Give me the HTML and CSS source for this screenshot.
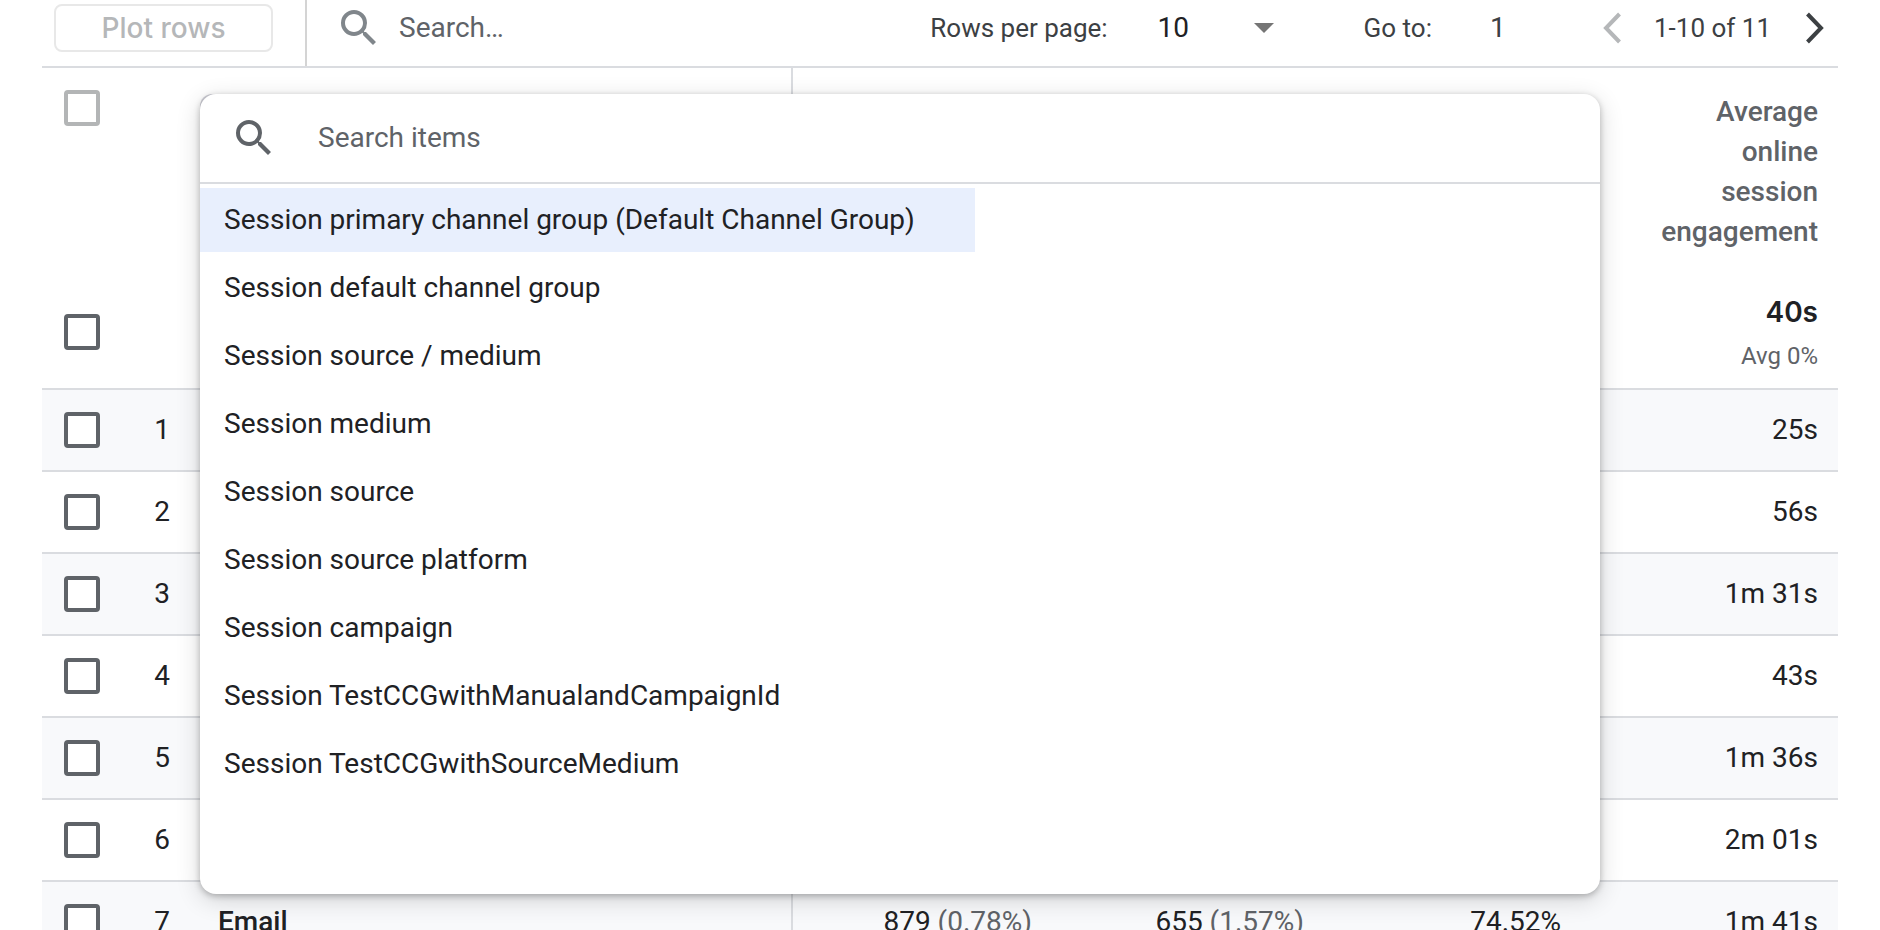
FILE: index.html
```html
<!DOCTYPE html>
<html lang="en">
<head>
<meta charset="utf-8">
<title>Traffic acquisition</title>
<link rel="stylesheet" href="styles.css">
</head>
<body>
<main class="report">
  <div class="toolbar">
    <div class="plot"><button class="plot-button" type="button" disabled>Plot rows</button></div>
    <label class="table-search">
      <svg class="icon" viewBox="0 0 24 24" aria-hidden="true"><path d="M15.5 14h-.79l-.28-.27A6.47 6.47 0 0 0 16 9.5 6.5 6.5 0 1 0 9.5 16c1.61 0 3.09-.59 4.23-1.57l.27.28v.79l5 4.99L20.49 19l-4.99-5zm-6 0C7.01 14 5 11.99 5 9.5S7.01 5 9.5 5 14 7.01 14 9.5 11.99 14 9.5 14z"/></svg>
      <input class="search-input" type="text" placeholder="Search…" aria-label="Search">
    </label>
    <div class="pager">
      <label class="pager-label" for="rows">Rows per page:</label>
      <span class="select-wrap">
        <select class="rows-select" id="rows"><option>10</option><option>25</option><option>50</option></select>
        <svg class="caret" viewBox="0 0 20 10" aria-hidden="true"><path d="M0 0h20L10 10z"/></svg>
      </span>
      <label class="pager-label" for="goto">Go to:</label>
      <input class="goto-input" id="goto" type="text" value="1">
      <button class="page-button" type="button" disabled aria-label="Previous page"><svg class="chevron" viewBox="0 0 20 32" aria-hidden="true"><path d="M17.500 2 4 16l13.500 14"/></svg></button>
      <span class="page-range">1-10 of 11</span>
      <button class="page-button" type="button" aria-label="Next page"><svg class="chevron" viewBox="0 0 20 32" aria-hidden="true"><path d="M2.500 2 16 16 2.500 30"/></svg></button>
    </div>
  </div>

  <table class="data">
    <colgroup><col class="col-check"><col class="col-num"><col><col class="col-a"><col class="col-b"><col class="col-c"><col class="col-c"></colgroup>
    <thead>
      <tr class="head">
        <th><input class="check" type="checkbox" disabled aria-label="Select all rows"></th>
        <th></th>
        <th class="dim"></th>
        <th></th><th></th><th></th>
        <th class="metric">Average online session engagement</th>
      </tr>
    </thead>
    <tbody>
      <tr class="total"><td><input class="check" type="checkbox" aria-label="Select total"></td><td></td><td class="dim"></td><td></td><td></td><td></td><td class="metric"><div class="total-value">40s</div><div class="total-note">Avg 0%</div></td></tr>
      <tr class="row"><td><input class="check" type="checkbox" aria-label="Select row 1"></td><td class="num">1</td><td class="dim"></td><td></td><td></td><td></td><td class="metric">25s</td></tr>
      <tr class="row"><td><input class="check" type="checkbox" aria-label="Select row 2"></td><td class="num">2</td><td class="dim"></td><td></td><td></td><td></td><td class="metric">56s</td></tr>
      <tr class="row"><td><input class="check" type="checkbox" aria-label="Select row 3"></td><td class="num">3</td><td class="dim"></td><td></td><td></td><td></td><td class="metric">1m 31s</td></tr>
      <tr class="row"><td><input class="check" type="checkbox" aria-label="Select row 4"></td><td class="num">4</td><td class="dim"></td><td></td><td></td><td></td><td class="metric">43s</td></tr>
      <tr class="row"><td><input class="check" type="checkbox" aria-label="Select row 5"></td><td class="num">5</td><td class="dim"></td><td></td><td></td><td></td><td class="metric">1m 36s</td></tr>
      <tr class="row"><td><input class="check" type="checkbox" aria-label="Select row 6"></td><td class="num">6</td><td class="dim"></td><td></td><td></td><td></td><td class="metric">2m 01s</td></tr>
      <tr class="row"><td><input class="check" type="checkbox" aria-label="Select row 7"></td><td class="num">7</td><td class="dim">Email</td><td class="metric">879 <span class="share">(0.78%)</span></td><td class="metric">655 <span class="share">(1.57%)</span></td><td class="metric">74.52%</td><td class="metric">1m 41s</td></tr>
    </tbody>
  </table>

  <div class="menu-anchor">
    <div class="menu">
      <label class="menu-search">
        <svg class="icon" viewBox="0 0 24 24" aria-hidden="true"><path d="M15.5 14h-.79l-.28-.27A6.47 6.47 0 0 0 16 9.5 6.5 6.5 0 1 0 9.5 16c1.61 0 3.09-.59 4.23-1.57l.27.28v.79l5 4.99L20.49 19l-4.99-5zm-6 0C7.01 14 5 11.99 5 9.5S7.01 5 9.5 5 14 7.01 14 9.5 11.99 14 9.5 14z"/></svg>
        <input class="search-input" type="text" placeholder="Search items" aria-label="Search items">
      </label>
      <div class="options">
        <button class="option selected" type="button">Session primary channel group (Default Channel Group)</button>
        <button class="option" type="button">Session default channel group</button>
        <button class="option" type="button">Session source / medium</button>
        <button class="option" type="button">Session medium</button>
        <button class="option" type="button">Session source</button>
        <button class="option" type="button">Session source platform</button>
        <button class="option" type="button">Session campaign</button>
        <button class="option" type="button">Session TestCCGwithManualandCampaignId</button>
        <button class="option" type="button">Session TestCCGwithSourceMedium</button>
      </div>
    </div>
  </div>
</main>
</body>
</html>
```
FILE: styles.css
```css
* { box-sizing: border-box; }

body {
  margin: 0;
  height: 100vh;
  overflow: hidden;
  background: #fff;
  color: #202124;
  font-family: Roboto, "Liberation Sans", sans-serif;
  font-size: 28px;
  line-height: 40px;
}

button, input, select {
  margin: 0;
  padding: 0;
  border: 0;
  background: none;
  color: inherit;
  font: inherit;
}

.report { position: relative; margin: 0 42px; }

.icon { flex: none; width: 48px; height: 48px; fill: currentColor; }

.search-input { flex: 1; min-width: 0; color: #5f6368; }
.search-input::placeholder { color: #5f6368; opacity: 1; }

/* Toolbar */
.toolbar {
  display: flex;
  height: 68px;
  border-bottom: 2px solid #dadce0;
}

.plot { padding: 4px 32px 0 12px; border-right: 2px solid #d4d4d4; }

.plot-button {
  width: 219px;
  height: 48px;
  border: 2px solid #e8e8e8;
  border-radius: 8px;
  color: #b5b7b9;
  font-family: Inter, sans-serif;
  font-weight: 500;
}

.table-search {
  display: flex;
  flex: 1;
  align-items: center;
  gap: 16px;
  height: 56px;
  padding-left: 28px;
  color: #80868b;
}

.pager {
  display: flex;
  align-items: center;
  height: 56px;
  padding-right: 13px;
  color: #3c4043;
}

.pager-label, .page-range { font-size: 26px; white-space: nowrap; }

.select-wrap {
  display: grid;
  align-items: center;
  width: 116px;
  margin: 0 90px 0 50px;
}
.rows-select, .caret { grid-area: 1 / 1; }
.rows-select { appearance: none; width: 100%; color: #202124; }
.caret { justify-self: end; width: 20px; height: 10px; fill: #757575; pointer-events: none; }

.goto-input { width: 114px; margin-right: 56px; padding-left: 58px; }

.page-button { display: flex; }
.page-button:disabled { color: #b5b7b9; }
.chevron { width: 20px; height: 32px; fill: none; stroke: currentColor; stroke-width: 4; }
.page-range { margin: 0 34px 0 32px; }

/* Data table */
.data { width: 100%; table-layout: fixed; border-collapse: separate; border-spacing: 0; }
.col-check, .col-num { width: 80px; }
.col-a { width: 259px; }
.col-b { width: 272px; }
.col-c { width: 257px; }

.data th, .data td { padding: 0; font-weight: 400; text-align: left; vertical-align: middle; }
.data .num { text-align: center; }
.data .dim { padding-left: 16px; border-right: 2px solid #dadce0; font-weight: 500; }
.data .metric { padding-right: 20px; text-align: right; }
.share { color: #5f6368; }

.head th { height: 200px; padding-top: 22px; vertical-align: top; }
.head .metric { padding-top: 24px; padding-left: 60px; color: #5f6368; font-weight: 500; }

.total td { height: 122px; padding-top: 8px; border-bottom: 2px solid #dadce0; }
.total-value { margin-top: 4px; font-family: Inter, sans-serif; font-weight: 600; }
.total-note { margin-top: 4px; color: #5f6368; font-size: 24px; }

.row td { height: 82px; border-bottom: 2px solid #dadce0; }
.row:nth-child(even) td { background: #f8f9fb; }

.check {
  appearance: none;
  display: block;
  width: 36px;
  height: 36px;
  margin-left: 22px;
  border: 4px solid #5f6368;
  border-radius: 4px;
  background: #fff;
}
.check:disabled { border-color: #b3b5b6; }

/* Dimension menu, over the table */
.menu-anchor {
  position: absolute;
  top: 94px;
  left: 158px;
  right: 238px;
  border-radius: 12px;
  background: linear-gradient(to right, #d0d0d8 50%, transparent 50%) top / 100% 50% no-repeat;
}

.menu {
  padding-bottom: 94px;
  border-radius: 16px;
  background: #fff;
  box-shadow: 0 2px 6px rgba(0, 0, 0, .25), 0 6px 24px rgba(0, 0, 0, .16);
}

.menu-search {
  display: flex;
  align-items: center;
  gap: 40px;
  height: 90px;
  padding: 0 24px 0 30px;
  border-bottom: 2px solid #dadce0;
  color: #5f6368;
}

.options {
  display: flex;
  flex-direction: column;
  gap: 4px;
  width: max-content;
  max-width: 100%;
  padding: 4px 0;
}

.option { height: 64px; padding: 0 60px 0 24px; text-align: left; white-space: nowrap; }
.selected { background: #e8effd; }
```
